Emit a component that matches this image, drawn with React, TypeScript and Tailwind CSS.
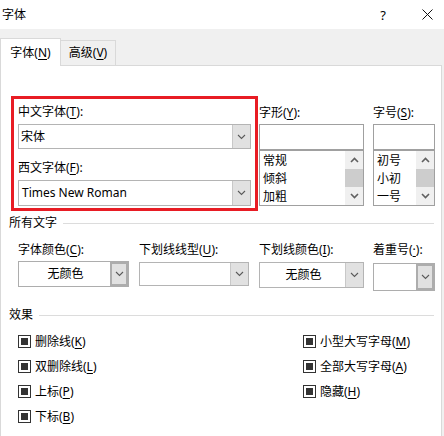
import React from "react";

function Chevron() {
  return (
    <svg width="9" height="6" viewBox="0 0 9 6" fill="none">
      <polyline points="1,1 4.5,4.5 8,1" stroke="#5a5a5a" strokeWidth="1.1" />
    </svg>
  );
}

function Select({
  w,
  h = 26,
  text,
  center,
  strong,
  className = "",
}: {
  w: number;
  h?: number;
  text?: React.ReactNode;
  center?: boolean;
  strong?: boolean;
  className?: string;
}) {
  return (
    <div
      className={`flex bg-white border ${strong ? "border-[#adadad]" : "border-[#b4b4b4]"} ${className}`}
      style={{ width: w, height: h }}
    >
      <div className={`flex-1 flex items-center ${center ? "justify-center pl-[2px]" : "pl-[2px]"}`}>
        {text}
      </div>
      <div
        className={`w-[18px] flex items-center justify-center bg-[#e1e1e1] ${
          strong ? "border-2 border-[#adadad]" : "border-l border-[#c8c8c8]"
        }`}
      >
        <Chevron />
      </div>
    </div>
  );
}

function Arrow({ up }: { up?: boolean }) {
  return (
    <svg width="9" height="6" viewBox="0 0 9 6" fill="none">
      <polyline
        points={up ? "1,5 4.5,1.5 8,5" : "1,1 4.5,4.5 8,1"}
        stroke="#606060"
        strokeWidth="1.6"
      />
    </svg>
  );
}

function ListPicker({ w, items }: { w: number; items: string[] }) {
  return (
    <div className="flex flex-col" style={{ width: w }}>
      <div className="h-[26px] border border-[#a0a0a0] bg-white" />
      <div className="h-[56px] border border-[#a0a0a0] bg-white flex">
        <div className="flex-1 flex flex-col pl-[3px] pt-[1px]">
          {items.map((it) => (
            <div key={it} className="h-[18px] leading-[18px]">
              {it}
            </div>
          ))}
        </div>
        <div className="w-[18px] bg-[#f0f0f0] flex flex-col items-center">
          <div className="h-[18px] flex items-center justify-center">
            <Arrow up />
          </div>
          <div className="h-[18px] w-full bg-[#cdcdcd]" />
          <div className="flex-1 flex items-center justify-center">
            <Arrow />
          </div>
        </div>
      </div>
    </div>
  );
}

function Check({ label }: { label: React.ReactNode }) {
  return (
    <div className="h-[25px] flex items-center">
      <div className="w-[13px] h-[13px] border border-[#333] bg-white flex items-center justify-center">
        <div className="w-[7px] h-[7px] bg-[#333]" />
      </div>
      <span className="ml-[4px]">{label}</span>
    </div>
  );
}

function Group({ title }: { title: string }) {
  return (
    <div className="h-[16px] flex items-center pl-[8px] pr-[7px]">
      <span>{title}</span>
      <div className="flex-1 h-px bg-[#dcdcdc] ml-[6px]" />
    </div>
  );
}

const U = ({ c }: { c: string }) => <span className="underline underline-offset-2">{c}</span>;

export default function App() {
  return (
    <div className="w-[444px] h-[436px] overflow-hidden bg-[#f0f0f0] text-[12px] leading-[16px] text-black font-['Noto_Sans','Noto_Sans_CJK_SC',sans-serif]">
      {/* Title bar */}
      <div className="h-[29px] bg-white flex items-center pl-[2px]">
        <span>字体</span>
        <span className="ml-auto mr-[36px] text-[13px]">?</span>
        <svg width="11" height="11" viewBox="0 0 11 11" className="mr-[11px]">
          <path d="M0.5 0.5 L10.5 10.5 M10.5 0.5 L0.5 10.5" stroke="#111" strokeWidth="1" />
        </svg>
      </div>

      {/* Tabs */}
      <div className="h-[36px] flex items-end">
        <div className="w-[61px] h-[28px] bg-white border border-b-0 border-[#d9d9d9] -mb-px relative z-10 flex items-center justify-center pt-[1px]">
          字体(<U c="N" />)
        </div>
        <div className="w-[55px] h-[25px] bg-[#f0f0f0] border border-l-0 border-b-0 border-[#d9d9d9] flex items-center justify-center">
          高级(<U c="V" />)
        </div>
      </div>

      {/* Panel */}
      <div className="w-[442px] h-[380px] bg-white border border-[#d9d9d9]">
        <div className="flex items-start pt-[30px] pl-[10px]">
          <div className="w-[247px] h-[115px] border-[3px] border-[#e81c24] pl-[4px] pt-[5px]">
            <div>中文字体(<U c="T" />):</div>
            <Select w={233} h={25} className="mt-[4px]" text="宋体" />
            <div className="mt-[11px]">西文字体(<U c="F" />):</div>
            <Select w={233} h={26} className="mt-[4px]" text={<span className="pl-[1px]">Times New Roman</span>} />
          </div>
          <div className="ml-[1px] pt-[9px]">
            <div>字形(<U c="Y" />):</div>
            <div className="mt-[3px]">
              <ListPicker w={105} items={["常规", "倾斜", "加粗"]} />
            </div>
          </div>
          <div className="ml-[9px] pt-[9px]">
            <div>字号(<U c="S" />):</div>
            <div className="mt-[3px]">
              <ListPicker w={62} items={["初号", "小初", "一号"]} />
            </div>
          </div>
        </div>

        <div className="mt-[4px]">
          <Group title="所有文字" />
        </div>

        <div className="flex pl-[17px] mt-[11px]">
          <div className="w-[121px]">
            <div>字体颜色(<U c="C" />):</div>
            <Select w={111} strong className="mt-[3px]" text="无颜色" center />
          </div>
          <div className="w-[120px]">
            <div>下划线线型(<U c="U" />):</div>
            <Select w={110} h={24} className="mt-[4px]" />
          </div>
          <div className="w-[114px]">
            <div>下划线颜色(<U c="I" />):</div>
            <Select w={105} className="mt-[4px]" text="无颜色" center />
          </div>
          <div>
            <div>着重号(<U c="·" />):</div>
            <Select w={62} h={28} strong className="mt-[5px]" />
          </div>
        </div>

        <div className="mt-[16px]">
          <Group title="效果" />
        </div>

        <div className="flex mt-[6px] pl-[17px]">
          <div className="w-[285px]">
            <Check label={<>删除线(<U c="K" />)</>} />
            <Check label={<>双删除线(<U c="L" />)</>} />
            <Check label={<>上标(<U c="P" />)</>} />
            <Check label={<>下标(<U c="B" />)</>} />
          </div>
          <div>
            <Check label={<>小型大写字母(<U c="M" />)</>} />
            <Check label={<>全部大写字母(<U c="A" />)</>} />
            <Check label={<>隐藏(<U c="H" />)</>} />
          </div>
        </div>
      </div>
    </div>
  );
}
